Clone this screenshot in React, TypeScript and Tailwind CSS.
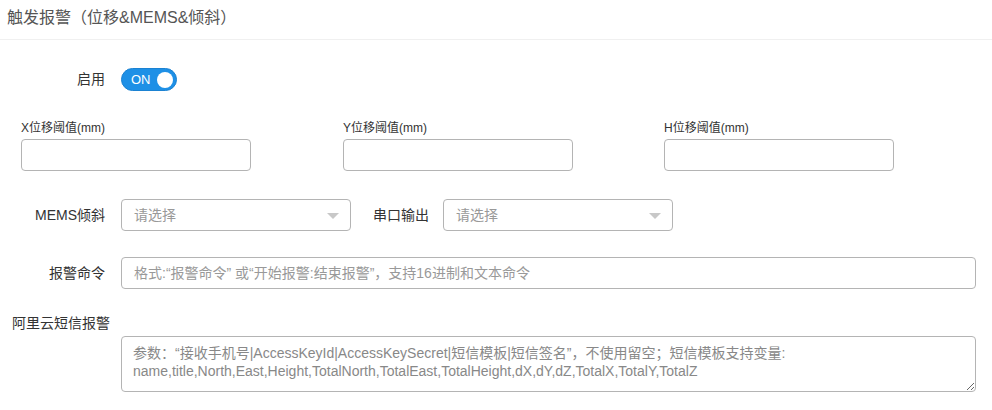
const font = "font-['Liberation_Sans','Noto_Sans_CJK_SC',sans-serif]";

const Arrow = () => (
  <svg width="12" height="7" viewBox="0 0 12 7" className="absolute right-[11px] top-[13px]">
    <path d="M0 0 L12 0 L6 6 Z" fill="#c8c8c8" />
  </svg>
);

const Select = () => (
  <div className="relative h-[32px] w-[230px] rounded-[4px] border border-[#b4b4b4] bg-white pl-[12px] text-[14px] leading-[30px] text-[#999]">
    请选择
    <Arrow />
  </div>
);

const Field = ({ label }: { label: string }) => (
  <div className="flex flex-col">
    <div className="mb-[4px] h-[14px] text-[12px] leading-[14px] text-[#333]">{label}</div>
    <input className="h-[32px] w-[230px] rounded-[4px] border border-[#b4b4b4] bg-white outline-none" />
  </div>
);

export default function App() {
  return (
    <div className={`${font} h-[410px] w-[992px] overflow-hidden bg-white text-[#333]`}>
      <div className="flex h-[40px] items-center border-b border-[#f0f0f0] pb-[3px] pl-[7px] text-[16px] text-[#555]">
        触发报警（位移&amp;MEMS&amp;倾斜）
      </div>

      <div className="mt-[28px] flex items-center">
        <div className="w-[105px] text-right text-[14px]">启用</div>
        <div className="ml-[16px] flex h-[23px] w-[56px] items-center justify-between rounded-full border border-[#1b82d2] bg-[#1e90e6] pl-[9px] pr-[3px]">
          <span className="text-[13px] leading-none text-white">ON</span>
          <span className="h-[16px] w-[16px] rounded-full bg-white" />
        </div>
      </div>

      <div className="mt-[30px] grid grid-cols-[322px_321px_1fr] pl-[21px]">
        <Field label="X位移阈值(mm)" />
        <Field label="Y位移阈值(mm)" />
        <Field label="H位移阈值(mm)" />
      </div>

      <div className="mt-[28px] flex items-center">
        <div className="w-[105px] text-right text-[14px]">MEMS倾斜</div>
        <div className="ml-[16px]">
          <Select />
        </div>
        <div className="ml-[22px] w-[56px] text-[14px]">串口输出</div>
        <div className="ml-[14px]">
          <Select />
        </div>
      </div>

      <div className="mt-[26px] flex items-center">
        <div className="w-[105px] text-right text-[14px]">报警命令</div>
        <div className="ml-[16px] h-[32px] w-[855px] rounded-[4px] border border-[#b4b4b4] pl-[12px] text-[14px] leading-[30px] text-[#999]">
          格式:“报警命令” 或“开始报警:结束报警”，支持16进制和文本命令
        </div>
      </div>

      <div className="mt-[26px] pl-[12px] text-[14px] leading-[16px]">阿里云短信报警</div>

      <div className="ml-[121px] mt-[5px]">
        <textarea
          className="block h-[56px] w-[855px] resize-y rounded-[4px] border border-[#b4b4b4] px-[11px] pt-[7px] text-[14px] leading-[18px] text-[#888] outline-none placeholder:text-[#888]"
          placeholder={"参数：“接收手机号|AccessKeyId|AccessKeySecret|短信模板|短信签名”，不使用留空；短信模板支持变量:\nname,title,North,East,Height,TotalNorth,TotalEast,TotalHeight,dX,dY,dZ,TotalX,TotalY,TotalZ"}
        />
      </div>
    </div>
  );
}
